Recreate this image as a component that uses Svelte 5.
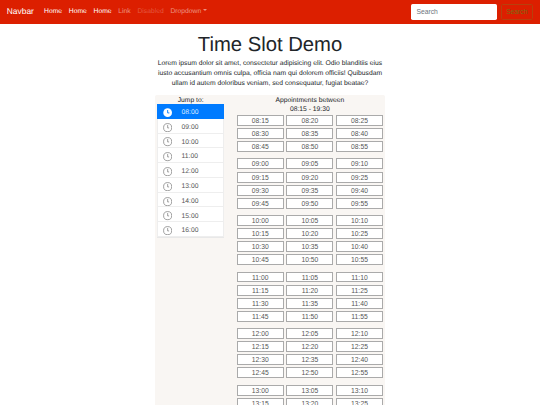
<script>
    const links = [
        { label: "Home", cls: "active" },
        { label: "Home", cls: "active" },
        { label: "Home", cls: "active" },
        { label: "Link", cls: "" },
        { label: "Disabled", cls: "disabled" },
    ];

    const jumpHours = [8, 9, 10, 11, 12, 13, 14, 15, 16];
    const slotHours = [8, 9, 10, 11, 12, 13];

    const pad = (n) => String(n).padStart(2, "0");

    function slotsFor(hour) {
        const mins = [];
        for (let m = hour === 8 ? 15 : 0; m < 60; m += 5) mins.push(`${pad(hour)}:${pad(m)}`);
        return mins;
    }
</script>

<!-- laid out at 1280 wide, then zoomed down to the 540 window -->
<div class="page">
    <nav class="navbar">
        <span class="brand">Navbar</span>
        <ul class="nav">
            {#each links as link}
                <li class={link.cls}>{link.label}</li>
            {/each}
            <li class="dropdown">Dropdown<span class="caret"></span></li>
        </ul>
        <form class="search">
            <input type="text" placeholder="Search" />
            <button type="button">Search</button>
        </form>
    </nav>

    <main>
        <h1>Time Slot Demo</h1>
        <p class="lead">
            Lorem ipsum dolor sit amet, consectetur adipisicing elit. Odio blanditiis eius
            iusto accusantium omnis culpa, officia nam qui dolorem officiis! Quibusdam
            ullam id autem doloribus veniam, sed consequatur, fugiat beatae?
        </p>

        <section class="panel">
            <div class="jump">
                <div class="jump-title">Jump to:</div>
                <ul>
                    {#each jumpHours as hour, i}
                        <li class:current={i === 0}>
                            <svg viewBox="0 0 16 16" width="22" height="22">
                                {#if i === 0}
                                    <circle cx="8" cy="8" r="7.5" fill="#fff" />
                                    <path d="M8 3.5V8.5H11" fill="none" stroke="#007bff" stroke-width="1.6" />
                                {:else}
                                    <circle cx="8" cy="8" r="7" fill="none" stroke="#777" stroke-width="1.2" />
                                    <path d="M8 3.5V8.5H10.5" fill="none" stroke="#777" stroke-width="1.2" />
                                {/if}
                            </svg>
                            <span>{pad(hour)}:00</span>
                        </li>
                    {/each}
                </ul>
            </div>

            <div class="slots">
                <div class="slots-title">Appointments between<br />08:15 - 19:30</div>
                {#each slotHours as hour}
                    <div class="slot-group">
                        {#each slotsFor(hour) as time}
                            <button type="button">{time}</button>
                        {/each}
                    </div>
                {/each}
            </div>
        </section>
    </main>
</div>

<style>
    :global(body) {
        margin: 0;
        background: #fff;
        overflow: hidden;
    }

    .page {
        zoom: 0.421875;
        width: 1280px;
        height: 960px;
        overflow: hidden;
        font-family: "Liberation Sans", Arial, sans-serif;
        font-size: 16px;
        line-height: 1.5;
        color: #212529;
        text-rendering: geometricPrecision;
    }

    .navbar {
        height: 56px;
        box-sizing: border-box;
        background: #dc1f00;
        display: flex;
        align-items: center;
        padding: 0 16px;
    }

    .brand {
        color: #fff;
        font-size: 20px;
        margin-right: 16px;
    }

    .nav {
        list-style: none;
        margin: 0;
        padding: 0;
        display: flex;
        color: rgba(255, 255, 255, 0.5);
    }

    .nav li {
        padding: 0 8px;
    }

    .nav .active {
        color: #fff;
    }

    .nav .disabled {
        color: rgba(255, 255, 255, 0.25);
    }

    .caret {
        display: inline-block;
        margin-left: 4px;
        vertical-align: 3px;
        border-top: 5px solid currentColor;
        border-left: 5px solid transparent;
        border-right: 5px solid transparent;
    }

    .search {
        margin-left: auto;
        display: flex;
        gap: 8px;
    }

    .search input {
        width: 204px;
        height: 38px;
        box-sizing: border-box;
        border: none;
        border-radius: 4px;
        padding: 0 12px;
        font: 16px "Liberation Sans", Arial, sans-serif;
        background: #fff;
    }

    .search input::placeholder {
        color: #6c757d;
    }

    .search button {
        width: 77px;
        height: 38px;
        padding: 0;
        background: transparent;
        border: 1px solid #b8400c;
        border-radius: 4px;
        color: #7d6a12;
        font: 16px "Liberation Sans", Arial, sans-serif;
    }

    main {
        width: 546px;
        margin: 0 auto;
        text-align: center;
    }

    h1 {
        margin: 22px 0 4px;
        font-size: 48px;
        line-height: 1.2;
        font-weight: 400;
    }

    .lead {
        margin: 0 0 14px;
    }

    .panel {
        display: flex;
        background: #f9f6f3;
        padding: 0 5px 0 6px;
        border-radius: 4px;
    }

    .jump {
        width: 158px;
        flex: none;
    }

    .jump-title {
        height: 21px;
        box-sizing: border-box;
        padding-top: 2px;
    }

    .jump ul {
        list-style: none;
        margin: 0;
        padding: 0;
        background: #fff;
        border-bottom: 1px solid #e8e8e8;
    }

    .jump li {
        height: 35px;
        box-sizing: border-box;
        display: flex;
        align-items: center;
        gap: 22px;
        padding: 8px 0 0 11px;
        color: #555;
        border: 1px solid #eee;
        border-top: none;
    }

    .jump li span {
        padding-top: 3px;
    }

    .jump li.current {
        background: #007bff;
        border-color: #007bff;
        color: #dcebff;
    }

    .slots {
        flex: 1;
        margin-left: 30px;
    }

    .slots-title {
        height: 47px;
        box-sizing: border-box;
        padding-top: 2px;
        line-height: 22px;
    }

    .slot-group {
        display: grid;
        grid-template-columns: repeat(3, 1fr);
        gap: 5px 6px;
        margin-bottom: 15px;
    }

    .slot-group button {
        height: 26px;
        padding: 0;
        box-sizing: border-box;
        background: #fff;
        border: 1px solid #aaa;
        font: 16px "Liberation Sans", Arial, sans-serif;
        color: #555;
    }
</style>
